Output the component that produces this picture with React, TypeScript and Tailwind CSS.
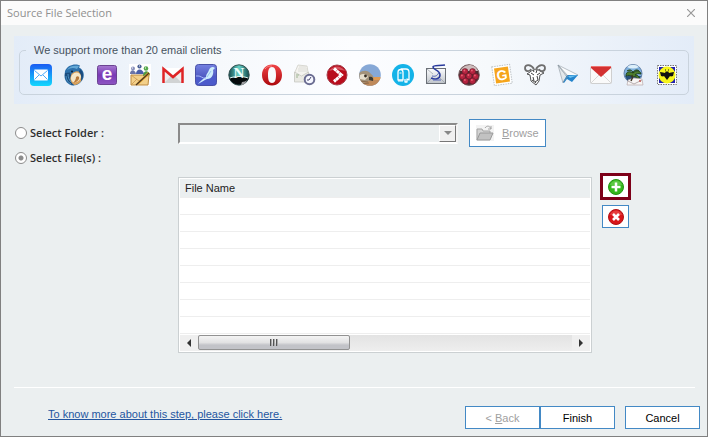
import type { ReactNode } from "react";

function Icon({ label, children }: { label: string; children: ReactNode }) {
  return (
    <svg
      role="img"
      aria-label={label}
      viewBox="0 0 22 22"
      className="size-[22px] shrink-0 overflow-visible"
    >
      {children}
    </svg>
  );
}

function ClientIcons() {
  return (
    <div className="flex justify-between">
      <Icon label="Mail">
        <defs>
          <linearGradient id="mail" x1="0" y1="0" x2="0" y2="1">
            <stop offset="0" stopColor="#1b5cf2" />
            <stop offset="1" stopColor="#12d8fd" />
          </linearGradient>
        </defs>
        <rect width="22" height="22" rx="4" fill="url(#mail)" />
        <rect x="4" y="5.500" width="14" height="11" rx="1" fill="#fff" />
        <path
          d="M4.500 6.500 11 12l6.500-5.500M4.500 15.500l4.500-4.500M17.500 15.500 13 11"
          fill="none"
          stroke="#38a0f8"
          strokeWidth=".9"
        />
      </Icon>
      <Icon label="Thunderbird">
        <path
          d="M2 7C4 2 9 0 14 .5l3 1-1 2c4 2 5.500 6 4.500 10C19 18 15 21.500 10 21.500 5 21 1.500 17 1.500 12z"
          fill="#2e71ab"
        />
        <path d="M4 6C6 2 11 1 16 2l-2 3C10 3 7 4 4 6z" fill="#63a8d6" />
        <path
          d="M8 11c3-5 9-5 11 0 1 5-2 9-7 10-4-1-6-6-4-10z"
          fill="#d9a059"
        />
        <path d="M9 11c3-4 8-3 9 1 0 4-4 6-7 7-3-2-4-5-2-8z" fill="#f6e7c8" />
        <path d="M13 13c2-2 4 0 3 2s-4 4-6 4c2-2 3-4 3-6z" fill="#b97a3a" />
        <path
          d="M2 9c-1 6 3 11 9 12.500-4-3-5-7-3-10l-1-3zM17 5c4 3 4 8 1 12 0-3 1-6-2-9z"
          fill="#1b4c7e"
        />
        <path d="M3 12c0 4 3 7 5 8M5 10c0 3 1 6 3 8" stroke="#5ba3d3" strokeWidth=".8" fill="none" />
        <circle cx="9" cy="7.500" r="1" fill="#0c2238" />
      </Icon>
      <Icon label="Entourage">
        <defs>
          <linearGradient id="ento" x1="0" y1="0" x2="0" y2="1">
            <stop offset="0" stopColor="#a679d0" />
            <stop offset=".5" stopColor="#7a39b6" />
            <stop offset="1" stopColor="#8d55c2" />
          </linearGradient>
        </defs>
        <rect
          x="1.500"
          y="1.500"
          width="19"
          height="19"
          rx="2"
          fill="url(#ento)"
          stroke="#6b4391"
        />
        <text
          x="11"
          y="16"
          textAnchor="middle"
          fontFamily="Liberation Sans, sans-serif"
          fontSize="19"
          fontWeight="700"
          fill="#fff"
        >
          e
        </text>
      </Icon>
      <Icon label="Outlook Express">
        <rect width="22" height="22" fill="#fff" />
        <path d="M2 11h18l-1 10H2z" fill="#f3d08a" stroke="#bb8940" />
        <path
          d="m2 11 8 6 10-6M2 21l6-6"
          fill="none"
          stroke="#c99550"
          strokeWidth=".8"
        />
        <path d="M1 10c0-5 5-5 6 0z" fill="#6b75a8" />
        <path d="M7 10c0-6 7-6 8 0z" fill="#4a5fa8" />
        <path d="M14 12c0-6 6-6 7-1z" fill="#4f9a44" />
        <circle cx="4" cy="4.500" r="2" fill="#8991bb" />
        <circle cx="10.500" cy="2.500" r="2.100" fill="#496096" />
        <circle cx="17" cy="4.500" r="2.300" fill="#56a94c" />
        <path d="M3 4h1M10 2h1M16 4h1" stroke="#fff" />
        <path d="M8 19 19 8l2 2-11 10-3 1z" fill="#e7a72d" />
        <path d="M7 21 20 9" stroke="#4b3521" strokeWidth="1.200" />
      </Icon>
      <Icon label="Gmail">
        <path d="M2 4h18v15H2z" fill="#eeeeee" />
        <path d="m2 19 7-7 2 2 2-2 7 7z" fill="#d1d3d4" />
        <path d="m3 4 8 7 8-7z" fill="#fff" />
        <path
          d="M1.500 19V5L11 13l9.500-8v14"
          fill="none"
          stroke="#df2426"
          strokeWidth="2.500"
        />
      </Icon>
      <Icon label="SeaMonkey">
        <defs>
          <linearGradient id="sea" x1="0" y1="0" x2="0" y2="1">
            <stop offset="0" stopColor="#7581e1" />
            <stop offset="1" stopColor="#343eac" />
          </linearGradient>
        </defs>
        <rect
          x=".5"
          y=".5"
          width="21"
          height="21"
          rx="3"
          fill="url(#sea)"
          stroke="#4951a7"
        />
        <path d="M1 13c5-3 7 4 20-1v6c0 2-1 3-3 3H4c-2 0-3-1-3-3z" fill="#4c5bcb" />
        <path
          d="M20 4c-2-2-5-1-6 2-1 3-3 4-3 7-3 2-6 4-8 7 4-2 6-4 9-5 5 0 7-5 6-9z"
          fill="#cdedfd"
        />
        <path d="M1 12c5-1 6 3 10 2" stroke="#a7b8f5" fill="none" />
        <path d="m12 13 4-6" stroke="#8ab7e9" strokeWidth=".8" />
      </Icon>
      <Icon label="Netscape">
        <defs>
          <linearGradient id="net">
            <stop offset="0" stopColor="#164e50" />
            <stop offset=".5" stopColor="#66d3c8" />
            <stop offset="1" stopColor="#12484a" />
          </linearGradient>
        </defs>
        <circle cx="11" cy="11" r="10.200" fill="url(#net)" stroke="#31504f" />
        <path d="M1.500 14c5-2 14-2 19 0-3 9-16 9-19 0z" fill="#060b0d" />
        <path d="M2 14c5-2 13-2 18 0" stroke="#e1f7f4" fill="none" />
        <path d="M14 18c2 0 4-1 5-2-1 3-3 5-6 5z" fill="#9c9da0" />
        <text
          x="11"
          y="14"
          textAnchor="middle"
          fontFamily="Liberation Serif, serif"
          fontSize="15"
          fontWeight="700"
          fill="#eefefa"
        >
          N
        </text>
      </Icon>
      <Icon label="Opera">
        <defs>
          <linearGradient id="opera" x1="0" y1="0" x2="0" y2="1">
            <stop offset="0" stopColor="#f04447" />
            <stop offset="1" stopColor="#ac080c" />
          </linearGradient>
        </defs>
        <path
          fillRule="evenodd"
          fill="url(#opera)"
          d="M11 .5C5 .5 1 5 1 11s4 10.500 10 10.500S21 17 21 11 17 .5 11 .5m0 2.500c3 0 4 3 4 8s-1 8-4 8-4-3-4-8 1-8 4-8"
        />
        <path d="M4 5c2-3 5-3 7-3" stroke="#fa8a87" fill="none" />
      </Icon>
      <Icon label="Scheduled mail">
        <path d="m1 8 3-7 9 1 1 6v9H1z" fill="#f5f4f0" stroke="#cfcfc8" strokeWidth=".8" />
        <path d="M5 3h7M4 5h9M4 7h9" stroke="#dcddd8" />
        <path d="m.5 8 7 4 7-4v10H.5z" fill="#e9e9e3" stroke="#c2c3bc" strokeWidth=".7" />
        <path d="M2 11h3M2 13h2" stroke="#9db592" />
        <circle cx="15.500" cy="15.500" r="4.800" fill="#f6f7ff" stroke="#6b6d92" strokeWidth="2" />
        <path d="m15 16 2-3m-2 3h-2" stroke="#46476c" />
      </Icon>
      <Icon label="PocoMail">
        <circle cx="11" cy="11" r="10" fill="#b90d1c" stroke="#a7404b" />
        <path d="M3 7c4-6 12-6 16 0-6-2-11-2-16 0" fill="#d65460" />
        <path
          d="m8 4.500 7.500 6.500L8 17.500"
          fill="none"
          stroke="#fff"
          strokeWidth="3"
          strokeDasharray="3.200 .3"
        />
      </Icon>
      <Icon label="Eudora">
        <defs>
          <clipPath id="hawk">
            <circle cx="11" cy="11" r="10.800" />
          </clipPath>
        </defs>
        <g clipPath="url(#hawk)">
          <rect width="22" height="22" fill="#86a8d6" />
          <path d="M0 14h22v8H0z" fill="#c08a5a" />
          <path d="M13 13h9v3h-9z" fill="#e09a52" />
          <path d="M0 9c4-3 9-3 12 1 2 1 3 3 2 6l-4 1-5 2-5-1z" fill="#a3927a" />
          <path d="M1 11c3-2 7-1 8 2l-3 3-5-1z" fill="#e6ddcb" />
          <path d="M10 13c3-1 5 1 4 4l-4-1z" fill="#3c3a33" />
          <circle cx="6.500" cy="12" r="1.400" fill="#342b20" />
          <path d="m1 17 8 1M2 20l8-1" stroke="#8a6a4c" />
        </g>
      </Icon>
      <Icon label="Postbox">
        <circle cx="11" cy="11" r="11" fill="#14b3e8" />
        <path
          d="M6 16V8.500c0-4 5-4 5 0V16zM8.500 5H14c2 0 3 1 3 3.500V16l-2-1v3h-2v-3"
          fill="none"
          stroke="#fff"
          strokeWidth="1.300"
          strokeLinejoin="round"
        />
        <path d="M6 17h5M7.500 9h2" stroke="#fff" />
      </Icon>
      <Icon label="Spicebird">
        <defs>
          <linearGradient id="spice" x1="0" y1="0" x2="0" y2="1">
            <stop offset="0" stopColor="#fcfdff" />
            <stop offset="1" stopColor="#bfc4ca" />
          </linearGradient>
        </defs>
        <rect x="1.500" y="4.500" width="19" height="15" fill="url(#spice)" stroke="#6b7077" />
        <path d="m2 19 6-6M20 19l-5-5M2 5l6 5" stroke="#989da5" strokeWidth=".7" />
        <path
          d="M20 1C14 2 8 1 8 3c0 3 7 3 7 8 0 4-5 5-9 3"
          fill="none"
          stroke="#293a9c"
          strokeWidth="1.600"
        />
        <path d="M7 12c4 1 6-1 7-4M8 16h8" fill="none" stroke="#5262b5" />
      </Icon>
      <Icon label="Raspberry">
        <circle cx="11" cy="11" r="10.300" fill="#4e2c31" stroke="#755a5d" />
        <path d="M2 7C6-1 17-1 20 7z" fill="#cdbdbd" />
        {[
          [7, 7.5],
          [14.5, 7.5],
          [17.5, 12.5],
          [4.5, 12.5],
          [11, 12],
          [14.5, 17],
          [7.5, 17],
        ].map(([cx, cy]) => (
          <g key={`${cx}-${cy}`}>
            <circle cx={cx} cy={cy} r="3" fill="#b52440" stroke="#5e1826" strokeWidth=".5" />
            <circle cx={cx - 0.6} cy={cy - 1} r=".9" fill="#ec6172" />
          </g>
        ))}
      </Icon>
      <Icon label="GyazMail">
        <g transform="rotate(-8 11 11)">
          <rect
            x="2"
            y="1.500"
            width="18"
            height="19"
            fill="#fff"
            stroke="#bcc2c6"
            strokeDasharray="1.500 1"
          />
          <rect x="4" y="3.500" width="14" height="15" fill="#f6a51b" />
          <text
            x="11"
            y="16"
            textAnchor="middle"
            fontFamily="Liberation Sans, sans-serif"
            fontSize="14"
            fontWeight="700"
            fill="#fff"
          >
            G
          </text>
        </g>
      </Icon>
      <Icon label="GNU Mail">
        <g fill="none" stroke="#3f3f3f">
          <path
            d="M6 8 3 10l3 1 1 6 5 4 3-4 1-6 4-2-4-2c-2-2-7-2-10 1z"
            fill="#fff"
            strokeWidth=".9"
          />
          <path
            d="M10 5C7 0 1 0 1 4s5 4 6 1M12 5c3-5 9-5 9-1s-5 4-6 1"
            stroke="#6e6e6e"
            strokeWidth="1.800"
          />
          <path d="m7 9 3 2m3 0 3-2M9 13l1 4m3-5 1 4-3 2m1 1-4-3M9 6l1 2m3-2-1 3" />
        </g>
      </Icon>
      <Icon label="Direct Mail">
        <path d="m1 1 5 18 4-6z" fill="#e3e8eb" stroke="#9aa4ac" strokeWidth=".7" />
        <path d="m1 1 20 10-10 3z" fill="#fbfcfd" stroke="#9da8b0" strokeWidth=".7" />
        <path d="m10 11 11 0-6 7-5-3-3 4-1-1z" fill="#2484cc" />
        <path d="m11 12 10-1-8 3z" fill="#6bc1ef" />
        <path d="M1 1 11 12l-5 6" stroke="#87949e" strokeWidth=".7" fill="none" />
      </Icon>
      <Icon label="Zimbra">
        <rect x=".5" y="2.500" width="21" height="17" rx="1" fill="#fafafa" stroke="#cfcfcf" />
        <path d="m1 19 8-8m4 0 8 8" stroke="#d8d8d8" />
        <path d="M1 2h20v2L11 13 1 4z" fill="#d33131" />
        <path d="M1 2h20v1H1z" fill="#ee7370" />
      </Icon>
      <Icon label="Entourage Archive">
        <circle cx="10" cy="9.500" r="9" fill="#7fb0dc" stroke="#6382aa" />
        <path d="M4 3c4-3 8-3 12 0-4 2-8 2-12 0" fill="#dceffa" />
        <path d="M2 12h16l-3 6H5z" fill="#274f79" />
        <path
          d="M3 12c0-5 4-5 7-3 3-3 7-3 8 1-3-1-5 0-6 1 3 0 5 2 4 5-2-3-4-4-6-3-3-2-5-2-7-1M4 7c3-2 5-1 6 2 1-3 4-4 6-2"
          fill="#4c7c2c"
          stroke="#1f401d"
        />
        <path d="m5 16 6-2 8 1 1 6H4z" fill="#f7f5f5" stroke="#b9aaab" strokeWidth=".7" />
        <path d="M9 11c1 3 0 4-1 6" stroke="#3f3524" strokeWidth="1.400" fill="none" />
        <path d="m5 17 6 3 8-4" stroke="#a3989a" strokeWidth=".8" fill="none" />
        <path d="M16 16h2v2h-2z" fill="#c77672" />
      </Icon>
      <Icon label="The Bat!">
        <rect
          x="1.500"
          y="1.500"
          width="19"
          height="19"
          fill="#fff"
          stroke="#777"
          strokeDasharray="1.500 1"
        />
        <rect x="3" y="3" width="16" height="16" fill="#2121b0" />
        <circle cx="11" cy="11" r="8.500" fill="#f6f51b" />
        <path
          d="M4 8c2 0 4 1 5 1l1-2 1 1 1-1 1 2c1 0 3-1 5-1l-1 4c-1 0-2 1-3 0-1 1-2 3-3 4-1-1-2-3-3-4-1 1-2 0-3 0z"
          fill="#101010"
        />
        <path d="M9 6h1m2 0h1" stroke="#101010" />
      </Icon>
    </div>
  );
}

function FolderIcon() {
  return (
    <svg viewBox="0 0 18 16" className="h-4 w-[18px] shrink-0" aria-hidden="true">
      <rect width="18" height="16" fill="#f3f3f3" />
      <path d="M1 15V4h5l1 2h7v3" fill="#d4d4d4" stroke="#a3a3a3" />
      <path d="M1 15 4 8h13l-3 7z" fill="#c2c2c2" stroke="#9a9a9a" />
      <path d="M9 3c2-3 5-2 6 1m0-3v3h-3" fill="none" stroke="#a5a5a5" />
    </svg>
  );
}

function AddIcon() {
  return (
    <svg viewBox="0 0 16 16" className="size-4" aria-hidden="true">
      <circle cx="8" cy="8" r="7.500" fill="#34b81d" stroke="#259314" />
      <path d="M2 6c2-6 10-6 12 0z" fill="#5cc944" />
      <path d="M8 3.500v9M3.500 8h9" stroke="#fff" strokeWidth="2.500" />
    </svg>
  );
}

function RemoveIcon() {
  return (
    <svg viewBox="0 0 16 16" className="size-4" aria-hidden="true">
      <circle cx="8" cy="8" r="7.500" fill="#d8161a" stroke="#b31115" />
      <path d="M2 6c2-6 10-6 12 0z" fill="#e63e3e" />
      <path d="m5 5 6 6m0-6-6 6" stroke="#fff" strokeWidth="2.600" />
    </svg>
  );
}

const radio =
  "size-3 appearance-none rounded-full border border-[#8c8c8c] bg-white checked:bg-[radial-gradient(circle,#8c8c8c_2px,#fff_3px)]";
const button = "h-[23px] w-[75px] border border-[#4389c5] bg-white";

export default function App() {
  return (
    <main className="flex min-h-screen flex-col border border-[#808080] bg-[#ebeff0] font-['Liberation_Sans',sans-serif] text-[11px] leading-4 text-black">
      <header className="flex h-6 items-center justify-between bg-[#fbfbfb] pr-3 pl-1.5 text-[#8f8f8f]">
        <h1 className="font-['Open_Sans',sans-serif]">Source File Selection</h1>
        <button type="button" aria-label="Close">
          <svg viewBox="0 0 8 8" className="size-2" aria-hidden="true">
            <path d="m0 0 8 8M8 0 0 8" stroke="#999" strokeWidth="1.200" />
          </svg>
        </button>
      </header>

      <section className="mx-[13px] mt-[11px] h-[68px] bg-[linear-gradient(to_right,#e3ecf8,#f6f9fc_30%,#fcfdff_50%,#f6f9fc_70%,#e3ecf8)] px-[5px] pt-1.5">
        <fieldset className="rounded-[5px] border border-[#c9d3dd] px-2.5 pt-1.5 pb-2">
          <legend className="-ml-1 px-2 text-[#46525e]">
            We support more than 20 email clients
          </legend>
          <ClientIcons />
        </fieldset>
      </section>

      <div className="mt-[15px] flex items-center pr-[161px] pl-3.5">
        <label className="flex w-[163px] items-center gap-[3px] font-['Open_Sans',sans-serif] font-semibold text-[#2e2e2e]">
          <input type="radio" name="source" className={radio} />
          Select Folder :
        </label>
        <div className="relative flex flex-1">
          <select
            aria-label="Folder"
            disabled
            className="h-[21px] w-full appearance-none border-2 border-t-[#8a8a8a] border-r-[#f4f4f4] border-b-white border-l-[#8a8a8a] bg-[#ebeff0]"
          />
          <span className="pointer-events-none absolute top-0.5 right-0.5 flex h-[17px] w-[17px] items-center justify-center border border-t-white border-r-[#777] border-b-[#777] border-l-white bg-[#f0f0f0]">
            <svg viewBox="0 0 8 4" className="h-1 w-2" aria-hidden="true">
              <path d="M0 0h8L4 4z" fill="#888" />
            </svg>
          </span>
        </div>
        <button
          type="button"
          disabled
          className="ml-[11px] flex h-7 w-[77px] items-center gap-2 border border-[#4389c5] bg-white pl-1.5 text-[#a0a0a0]"
        >
          <FolderIcon />
          <span>
            <u>B</u>rowse
          </span>
        </button>
      </div>

      <div className="flex h-[22px] items-center pl-3.5">
        <label className="flex items-center gap-[3px] font-['Open_Sans',sans-serif] font-semibold text-[#2e2e2e]">
          <input type="radio" name="source" defaultChecked className={radio} />
          Select File(s) :
        </label>
      </div>

      <div className="mt-1 flex items-start pr-[76px] pl-[177px]">
        <div className="mt-1 flex-1 border border-[#cbd0d2] bg-white p-px">
          <table className="w-full border-separate border-spacing-0">
            <thead>
              <tr>
                <th className="h-[19px] border-b border-[#eee] bg-[#ebeff0] bg-clip-padding px-[5px] text-left font-normal text-[#222]">
                  File Name
                </th>
              </tr>
            </thead>
            <tbody>
              {Array.from({ length: 8 }, (_, i) => (
                <tr key={i}>
                  <td className="h-[17px] border-b border-[#eee] p-0" />
                </tr>
              ))}
            </tbody>
          </table>
          <div className="mt-px flex h-4 items-center justify-between bg-linear-to-b from-[#e3e3e3] to-[#eee]">
            <button
              type="button"
              aria-label="Scroll left"
              className="flex h-full w-[18px] items-center justify-center bg-[#efefef]"
            >
              <svg viewBox="0 0 4 8" className="h-2 w-1" aria-hidden="true">
                <path d="M4 0v8L0 4z" fill="#333" />
              </svg>
            </button>
            <div className="flex h-full flex-1">
              <div className="flex h-[15px] w-[152px] items-center justify-center gap-px rounded-xs border border-[#929292] bg-linear-to-b from-[#f4f4f4] via-[#e2e2e3] via-50% to-[#c2c3c8] to-70%">
                <i className="h-[7px] w-0.5 border-l border-[#555] bg-[#aaa]" />
                <i className="h-[7px] w-0.5 border-l border-[#555] bg-[#aaa]" />
                <i className="h-[7px] w-0.5 border-l border-[#555] bg-[#aaa]" />
              </div>
            </div>
            <button
              type="button"
              aria-label="Scroll right"
              className="flex h-full w-[18px] items-center justify-center bg-[#efefef]"
            >
              <svg viewBox="0 0 4 8" className="h-2 w-1" aria-hidden="true">
                <path d="M0 0v8l4-4z" fill="#333" />
              </svg>
            </button>
          </div>
        </div>
        <div className="ml-2 flex flex-col items-center gap-[5px]">
          <button
            type="button"
            aria-label="Add file"
            className="flex h-[27px] w-[31px] items-center justify-center border-3 border-[#7d0019] bg-white"
          >
            <AddIcon />
          </button>
          <button
            type="button"
            aria-label="Remove file"
            className="flex h-[23px] w-[27px] items-center justify-center border border-[#4389c5] bg-white"
          >
            <RemoveIcon />
          </button>
        </div>
      </div>

      <footer className="mt-[34px]">
        <hr className="mr-3 ml-[13px] border-white" />
        <div className="flex items-start pt-[18px] pr-[7px] pb-[7px] pl-[47px]">
          <a href="#help" className="mr-auto text-[#2456a0] underline">
            To know more about this step, please click here.
          </a>
          <button type="button" disabled className={`${button} text-[#a0a0a0]`}>
            &lt; <u>B</u>ack
          </button>
          <button type="button" className={button}>
            Finish
          </button>
          <button type="button" className={`${button} ml-2.5`}>
            Cancel
          </button>
        </div>
      </footer>
    </main>
  );
}
